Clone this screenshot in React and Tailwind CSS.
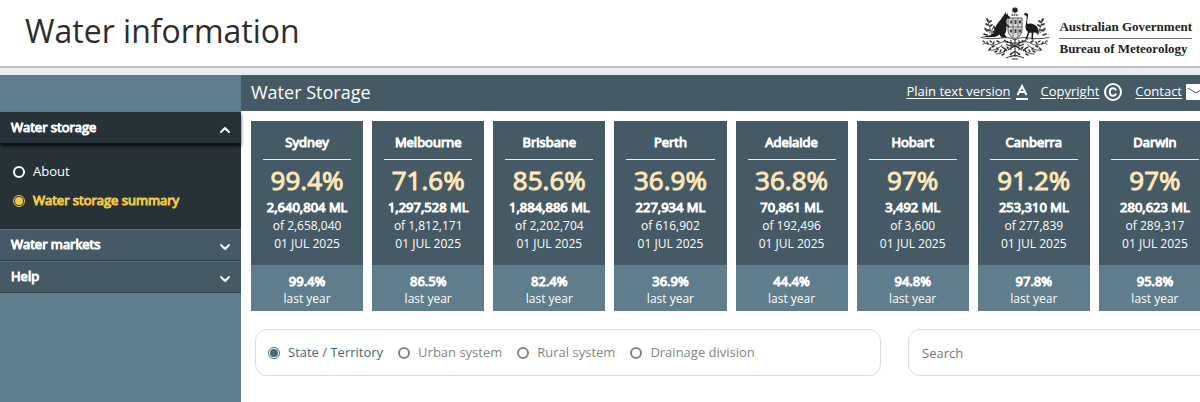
import { useState } from 'react';
import { ChevronDown, ChevronUp } from 'lucide-react';

const cities = [
  { name: 'Sydney', percent: '99.4%', volume: '2,640,804', capacity: '2,658,040', lastYear: '99.4%' },
  { name: 'Melbourne', percent: '71.6%', volume: '1,297,528', capacity: '1,812,171', lastYear: '86.5%' },
  { name: 'Brisbane', percent: '85.6%', volume: '1,884,886', capacity: '2,202,704', lastYear: '82.4%' },
  { name: 'Perth', percent: '36.9%', volume: '227,934', capacity: '616,902', lastYear: '36.9%' },
  { name: 'Adelaide', percent: '36.8%', volume: '70,861', capacity: '192,496', lastYear: '44.4%' },
  { name: 'Hobart', percent: '97%', volume: '3,492', capacity: '3,600', lastYear: '94.8%' },
  { name: 'Canberra', percent: '91.2%', volume: '253,310', capacity: '277,839', lastYear: '97.8%' },
  { name: 'Darwin', percent: '97%', volume: '280,623', capacity: '289,317', lastYear: '95.8%' },
];

const areas = ['State / Territory', 'Urban system', 'Rural system', 'Drainage division'];

function Foliage() {
  return (
    <g fill="none" stroke="#333" strokeLinecap="round">
      <path d="M1 31.500c7 1.500 12 1.500 20 .5s10 0 14 2M3 38c5-2 8 2 12 1s6-4 11-3M9 44c5 1 9-1 13-5M16 48c5 0 8-2 12-6" strokeWidth=".9" />
      <path d="M8 14c0 4 2 7 3 12M14 20c-2 3-3 6-2 9M5 22c2 1 4 3 5 5" strokeWidth=".8" />
      <path d="M7 13l1 2M9.500 16l1.500-1M6 18l2 1M10 20l2-1M14 21l1 2M5 23l2 2M8 24l2 0M13 26l2-1M4 28l3 1" strokeWidth="1.700" />
      <path d="M3 35l1.500 1M7 36l1 2M10 35l1.500 1M14 36l-1 2M17 35l2 1M12 41l2-1M9 44l1.500-2M17 42l1 1.500M15 46l2-1M20 46l1-2M22 41l1.500 1M24 46l1-2M22 49l2-1M27 41l1.500 1" strokeWidth="1.500" />
    </g>
  );
}

function CoatOfArms() {
  return (
    <svg viewBox="0 0 71 54" className="h-[54px] w-[71px] shrink-0" role="img" aria-label="Commonwealth Coat of Arms">
      <Foliage />
      <g transform="matrix(-1 0 0 1 70 0)">
        <Foliage />
      </g>
      <path d="M35 0.500l.8 1.800 1.700-.8-.4 1.900 1.900.6-1.900.8.6 1.800-1.800-.6-.9 1.800-.9-1.800-1.800.6.6-1.800-1.900-.8 1.900-.6-.4-1.900 1.700.8z" fill="#222" />
      <path d="M31.500 9h7" stroke="#333" strokeWidth="1.300" strokeDasharray="1.500 .7" />
      <path d="M28 12h14v12q0 6-7 9q-7-3-7-9z" fill="#ddd" stroke="#444" strokeWidth=".9" />
      <path d="M28 21h14M33 12v19M38 12v19" stroke="#555" strokeWidth=".8" />
      <path d="M30 14.500h2v3h-2zM34.500 14h2v4h-2zM39 14.500h2v3h-2zM30 23.500h2v3h-2zM34.500 23h2v4h-2zM39 23.500h2v3h-2z" fill="#444" />
      <path d="M25.500 6l1 3 1-2 .6 2.500 2 1.600-.3 1.200-2.700.3c-.8 1.800-.6 3.600-.4 5.400l2.800 2.200-.5 1-2.700-1.200c.5 4-.2 6.500-1.800 8.500l2.600 3-5.500 0c-1-1-1.500-2-2-3-3 3-9 3.200-18 2.300 7-.8 11-1.800 12.800-5 .2-6 4-9 6.500-12.500 2-2.500 2.900-4.500 4.100-5.800z" fill="#1c1c1c" />
      <path d="M43.500 8.500l2-1.500c2-.2 2.800 1.200 2.500 3.200-.4 3-1.500 5.500-.5 7.800 3.500-1.800 9 .5 10.500 5 .6 2.200.5 3.500-.5 5.200-1.200-1.600-2.500-1.700-4-1.600l-.6 5.600 1.600 1.300h-3l.1-6.700-2-.4-2.300 5.600 1 1.500h-3l2.700-7.500c-2.500-2-2.700-4.500-2.300-7 .5-3.200 1-5.800.9-9z" fill="#1c1c1c" />
      <g fill="none" stroke="#333" strokeWidth="1.100">
        <path d="M24 34c4 4 18 4 22 0M26 38c4 3 14 3 18 0M31 34v10M39 34v10M35 33v18M28 44l12-7M42 44l-12-7M30 49l5-4 5 4M26 52c4-2 5-1 9-3 4 2 5 1 9 3M32 53h6" />
        <path d="M27 35l1 2M42 36l1-2M32 47l-2 2M38 47l2 2M24 42l3 3M46 42l-3 3" strokeWidth="1.600" />
      </g>
    </svg>
  );
}

function Logo() {
  return (
    <div className="flex items-start">
      <CoatOfArms />
      <div className="ml-2 mt-[11px] font-['Liberation_Serif',serif] text-[13px] font-bold leading-5 text-[#222]">
        <p className="border-b border-[#777] pb-px">Australian Government</p>
        <p>Bureau of Meteorology</p>
      </div>
    </div>
  );
}

function MenuSection({ title, open, onToggle, children }) {
  const Icon = open ? ChevronUp : ChevronDown;

  return (
    <section>
      <button
        type="button"
        aria-expanded={open}
        onClick={onToggle}
        className={`relative flex h-8 w-full items-center justify-between border-b pl-[11px] pr-2 text-left text-[13px] ${
          open ? 'border-[#0d1417] bg-[#263238] shadow-[0_2px_3px_#000c]' : 'border-[#2c3e47] bg-[#455a64] shadow-[inset_0_1px_#607480]'
        }`}
      >
        <span className="[-webkit-text-stroke:1px]">{title}</span>
        <Icon className="mt-1 size-4" strokeWidth={3} />
      </button>
      {open && children}
    </section>
  );
}

function Sidebar() {
  const [openSection, setOpenSection] = useState('storage');
  const [page, setPage] = useState('summary');
  const toggle = (id) => setOpenSection(openSection === id ? '' : id);

  const pages = [
    { id: 'about', label: 'About' },
    { id: 'summary', label: 'Water storage summary' },
  ];

  return (
    <nav className="w-[241px] shrink-0 bg-[#607d8b] pt-[37px] text-white">
      <MenuSection title="Water storage" open={openSection === 'storage'} onToggle={() => toggle('storage')}>
        <div className="flex h-[85px] flex-col gap-2 bg-[#263238] pt-[17px]">
          {pages.map((item) => (
            <label
              key={item.id}
              className={`flex items-center gap-2 pl-[13px] text-[13px] leading-[21px] ${page === item.id ? 'text-[#f5c842]' : ''}`}
            >
              <Radio name="page" checked={page === item.id} onChange={() => setPage(item.id)} />
              <span className={page === item.id ? '[-webkit-text-stroke:1px]' : ''}>{item.label}</span>
            </label>
          ))}
        </div>
      </MenuSection>
      <MenuSection title="Water markets" open={openSection === 'markets'} onToggle={() => toggle('markets')} />
      <MenuSection title="Help" open={openSection === 'help'} onToggle={() => toggle('help')} />
    </nav>
  );
}

function Radio(props) {
  return (
    <input
      type="radio"
      className="size-3 shrink-0 appearance-none rounded-full border-2 border-current p-px checked:border checked:bg-current checked:bg-clip-content"
      {...props}
    />
  );
}

function Toolbar() {
  return (
    <div className="flex h-9 items-center justify-between overflow-hidden bg-[#455a64] pb-0.5 pl-[10px] text-white">
      <h2 className="text-lg">Water Storage</h2>
      <div className="-mr-[6px] flex items-center gap-3 text-[13px]">
        <a href="#plain" className="flex items-center gap-1">
          <span className="underline underline-offset-2">Plain text version</span>
          <svg viewBox="0 0 14 16" className="h-4 w-[14px]" fill="none" stroke="currentColor" strokeWidth="2">
            <path d="M2.500 11L7 2l4.500 9M4 8h6M1 15h12" />
          </svg>
        </a>
        <a href="#copyright" className="flex items-center gap-1">
          <span className="underline underline-offset-2">Copyright</span>
          <svg viewBox="0 0 20 20" className="size-5" fill="none" stroke="currentColor" strokeWidth="2">
            <circle cx="10" cy="10" r="8" />
            <path d="M13 8.500c-.4-1.500-1.600-2.200-3-2.200-2 0-3.200 1.500-3.200 3.700s1.200 3.700 3.200 3.700c1.400 0 2.600-.7 3-2.200" />
          </svg>
        </a>
        <a href="#contact" className="flex items-center gap-1">
          <span className="underline underline-offset-2">Contact</span>
          <svg viewBox="0 0 20 16" className="h-4 w-5">
            <rect width="20" height="16" rx="1" fill="#fff" />
            <path d="M2 4l8 5 8-5" fill="none" stroke="#455a64" strokeWidth="1" />
          </svg>
        </a>
      </div>
    </div>
  );
}

function CityCard({ city }) {
  return (
    <article className="bg-[#455a64] text-center text-xs leading-[18px] text-white">
      <div className="h-36 px-3 pt-[11px]">
        <h3 className="h-7 border-b border-[#ffecb3] text-[13px] leading-5 [-webkit-text-stroke:1px]">{city.name}</h3>
        <p className="pt-1 text-[26px] leading-[33px] text-[#ffe7ba] [-webkit-text-stroke:1px]">{city.percent}</p>
        <p className="-mx-3 text-[13px] leading-5 [-webkit-text-stroke:1px]">{city.volume} ML</p>
        <p>of {city.capacity}</p>
        <p>01 JUL 2025</p>
      </div>
      <div className="h-[46px] bg-[#607d8b] pt-[7px]">
        <p className="text-[13px] leading-[18px] [-webkit-text-stroke:1px]">{city.lastYear}</p>
        <p>last year</p>
      </div>
    </article>
  );
}

function Filters() {
  const [area, setArea] = useState(areas[0]);

  return (
    <div className="-mr-[21px] mt-[18px] grid grid-cols-[2fr_1fr] gap-[27px] pl-[14px]">
      <div className="flex h-[47px] items-center gap-[15px] rounded-xl border border-[#ddd] px-3 text-[13px]">
        {areas.map((name) => (
          <label
            key={name}
            className={`flex items-center gap-2 font-medium ${area === name ? 'text-[#456878]' : 'text-[#858585]'}`}
          >
            <Radio name="area" checked={area === name} onChange={() => setArea(name)} />
            {name}
          </label>
        ))}
      </div>
      <input
        type="search"
        aria-label="Search"
        placeholder="Search"
        className="h-[47px] min-w-0 rounded-xl border border-[#ddd] px-[13px] text-[13px] placeholder:text-[#757575]"
      />
    </div>
  );
}

export default function App() {
  return (
    <div className="flex min-h-screen flex-col overflow-hidden bg-white font-['Open_Sans',sans-serif]">
      <header className="flex h-[66px] items-start justify-between pl-[25px] pr-2 pt-[6px]">
        <h1 className="text-[32px] leading-[50px] text-[#2d2d2d]">Water information</h1>
        <Logo />
      </header>
      <div className="h-[9px] border-t-2 border-[#bdbfc1] bg-[#e9edf0]" />
      <div className="flex grow">
        <Sidebar />
        <main className="min-w-0 flex-1 overflow-hidden">
          <Toolbar />
          <div className="-mr-[11px] grid grid-cols-8 gap-[9px] pl-[10px] pt-[10px]">
            {cities.map((city) => (
              <CityCard key={city.name} city={city} />
            ))}
          </div>
          <Filters />
        </main>
      </div>
    </div>
  );
}
